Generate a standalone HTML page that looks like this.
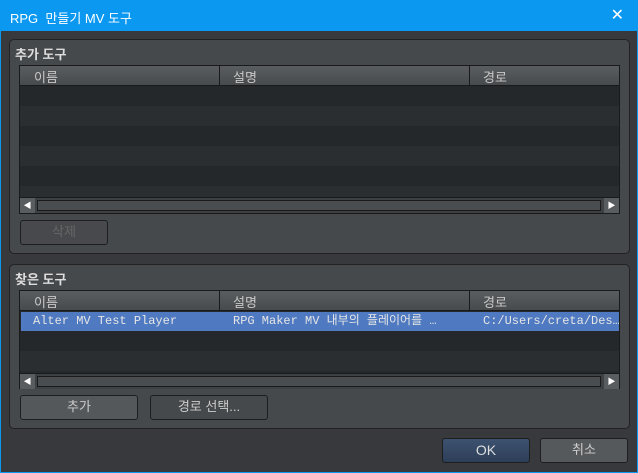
<!DOCTYPE html><html><head><meta charset="utf-8"><style>
*{margin:0;padding:0;box-sizing:border-box}
body{width:638px;height:473px;background:#0a98f0;font-family:"Liberation Sans","Noto Sans CJK KR",sans-serif;position:relative;overflow:hidden}
.title{left:10px;top:8px;color:#fff;font-size:13px}
.body{left:1px;top:31px;width:636px;height:441px;background:#37393c}
.panel{background:#46494c;border:1px solid #222;border-radius:5px}
.pt{color:#ddd;font-size:13px;font-weight:bold}
.tbl{background:#26292b;border:1px solid #1a1a1a;overflow:hidden}
.hd{height:20px;background:linear-gradient(#5a5d60,#484b4e);border-bottom:1px solid #1a1a1a;position:relative;color:#c8c8c8;font-size:13px}
.hd span{position:absolute;top:1px}
.hd i{position:absolute;top:0;width:1px;height:20px;background:#1a1a1a}
.row{height:20px}
.r1{background:#25282a}.r2{background:#2b2e31}
.sb{height:16px;background:#3e4144;border-top:1px solid #1a1a1a}
.btn{border:1px solid #1e1e1e;border-radius:3px;background:#55585b;color:#ccc;font-size:13px;text-align:center;line-height:22px}
.mono{font-family:"Liberation Mono","Noto Sans CJK KR",monospace;font-size:12px;color:#e6e6e6}
.a{position:absolute}
</style></head><body>
<div class="a title">RPG&nbsp; 만들기 MV 도구</div>
<div class="a" style="right:14px;top:5px;color:#fff;font-size:16px">✕</div>
<div class="a body"></div>

<div class="a panel" style="left:9px;top:39px;width:621px;height:215px"></div>
<div class="a pt" style="left:15px;top:44px">추가 도구</div>
<div class="a tbl" style="left:19px;top:65px;width:601px;height:149px">
<div class="hd"><span style="left:14px">이름</span><i style="left:199px"></i><span style="left:213px">설명</span><i style="left:449px"></i><span style="left:463px">경로</span></div>
<div class="row r1"></div><div class="row r2"></div><div class="row r1"></div><div class="row r2"></div><div class="row r1"></div><div class="row r2" style="height:12px"></div>
</div>
<div class="a sb" style="left:20px;top:197px;width:599px;height:16px">
<div class="a" style="left:0;top:0;width:15px;height:15px;background:#5a5d60;color:#fff;font-size:8px;line-height:15px;text-align:center">◀</div>
<div class="a" style="left:17px;top:2px;width:564px;height:11px;border:1px solid #1a1a1a;background:#4a4d50"></div>
<div class="a" style="right:0;top:0;width:15px;height:15px;background:#5a5d60;color:#fff;font-size:8px;line-height:15px;text-align:center">▶</div>
</div>
<div class="a btn" style="left:20px;top:220px;width:88px;height:25px;background:#47494c;color:#666">삭제</div>

<div class="a panel" style="left:9px;top:264px;width:621px;height:165px"></div>
<div class="a pt" style="left:15px;top:269px">찾은 도구</div>
<div class="a tbl" style="left:19px;top:290px;width:601px;height:99px">
<div class="hd"><span style="left:14px">이름</span><i style="left:199px"></i><span style="left:213px">설명</span><i style="left:449px"></i><span style="left:463px">경로</span></div>
<div class="row mono" style="background:#4f79c0;margin:1px 0 0 1px;height:19px;line-height:19px;position:relative">
<span class="a" style="left:12px">Alter MV Test Player</span><span class="a" style="left:212px">RPG Maker MV 내부의 플레이어를 …</span><span class="a" style="left:462px">C:/Users/creta/Des…</span></div>
<div class="row r1"></div><div class="row r2"></div>
</div>
<div class="a sb" style="left:20px;top:373px;width:599px;height:16px">
<div class="a" style="left:0;top:0;width:15px;height:15px;background:#5a5d60;color:#fff;font-size:8px;line-height:15px;text-align:center">◀</div>
<div class="a" style="left:17px;top:2px;width:564px;height:11px;border:1px solid #1a1a1a;background:#4a4d50"></div>
<div class="a" style="right:0;top:0;width:15px;height:15px;background:#5a5d60;color:#fff;font-size:8px;line-height:15px;text-align:center">▶</div>
</div>
<div class="a btn" style="left:20px;top:395px;width:118px;height:25px">추가</div>
<div class="a btn" style="left:150px;top:395px;width:118px;height:25px;background:#46494c">경로 선택...</div>

<div class="a btn" style="left:442px;top:438px;width:88px;height:25px;background:linear-gradient(#3d5270,#2d3e58);color:#ddd;font-size:14px">OK</div>
<div class="a btn" style="left:540px;top:438px;width:88px;height:25px;background:#56595c">취소</div>
</body></html>
